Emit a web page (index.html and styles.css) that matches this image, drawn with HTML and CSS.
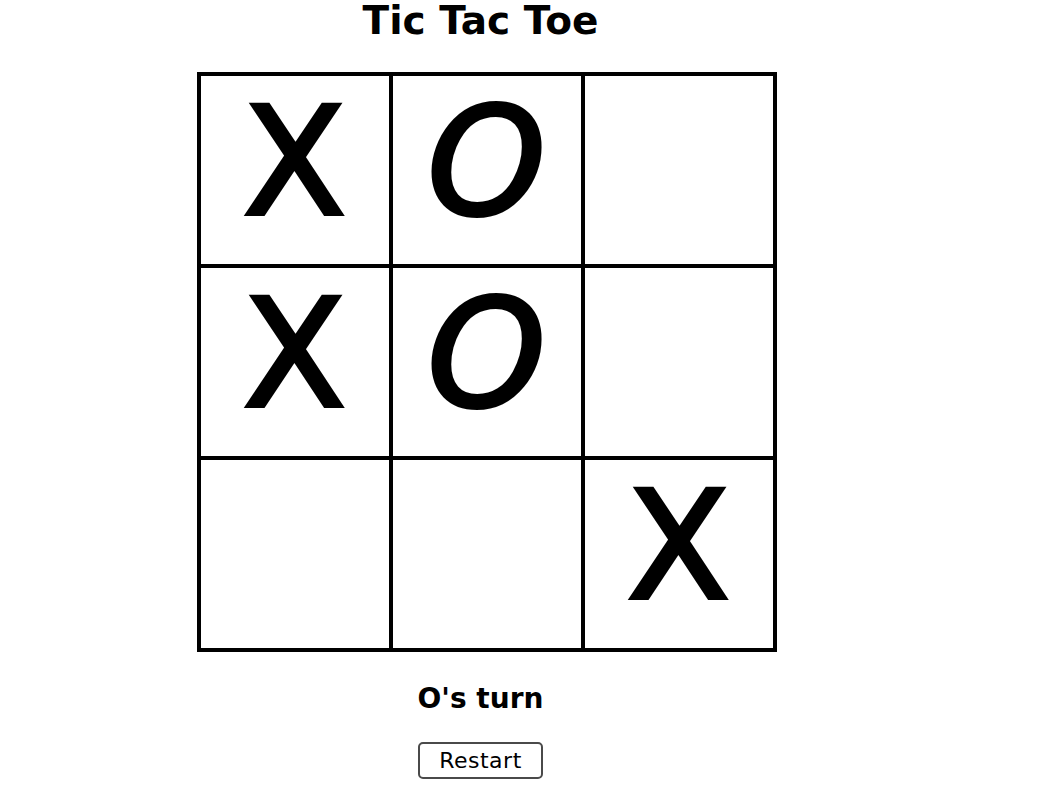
FILE: index.html
```html
<!DOCTYPE html>
<html lang="en">
<head>
<meta charset="utf-8">
<title>Tic Tac Toe</title>
<link rel="stylesheet" href="styles.css">
</head>
<body>
<div class="app">
  <h1 class="title">Tic Tac Toe</h1>
  <div class="board">
    <div class="cell"><span class="mark">X</span></div>
    <div class="cell"><span class="mark mark-o">O</span></div>
    <div class="cell"></div>
    <div class="cell"><span class="mark">X</span></div>
    <div class="cell"><span class="mark mark-o">O</span></div>
    <div class="cell"></div>
    <div class="cell"></div>
    <div class="cell"></div>
    <div class="cell"><span class="mark">X</span></div>
  </div>
  <div class="status">O's turn</div>
  <button class="restart" type="button">Restart</button>
</div>
</body>
</html>
```

FILE: styles.css
```css
html, body {
  margin: 0;
  padding: 0;
  background: #ffffff;
}

body {
  font-family: "DejaVu Sans", "Liberation Sans", sans-serif;
  color: #000000;
}

.app {
  width: 961px;
  display: flex;
  flex-direction: column;
  align-items: center;
}

.title {
  margin: 1px 0 0 0;
  font-size: 39px;
  line-height: 40px;
  font-weight: bold;
}

.board {
  margin-top: 31px;
  margin-left: 12px;
  display: grid;
  grid-template-columns: repeat(3, 192px);
  grid-template-rows: repeat(3, 192px);
  border: 2px solid #000;
}

.cell {
  border: 2px solid #000;
  display: flex;
  align-items: center;
  justify-content: center;
}

.mark {
  font-size: 150px;
  line-height: 160px;
  margin-bottom: 16px;
  -webkit-text-stroke: 4px #000;
}

.mark-o {
  font-style: oblique;
}

.status {
  margin-top: 33px;
  font-size: 28px;
  line-height: 28px;
  font-weight: bold;
}

.restart {
  margin-top: 29px;
  width: 125px;
  height: 37px;
  box-sizing: border-box;
  border: 2px solid #4a4a4a;
  border-radius: 5px;
  background: #ffffff;
  color: #000;
  font-family: "DejaVu Sans", "Liberation Sans", sans-serif;
  font-size: 22px;
  letter-spacing: 0.5px;
  padding: 0;
  display: flex;
  align-items: center;
  justify-content: center;
}
```
